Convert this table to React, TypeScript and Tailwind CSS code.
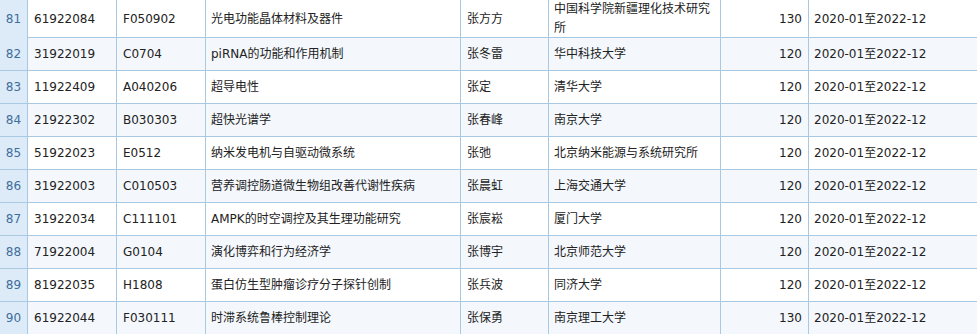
const rows = [
  ["81", "61922084", "F050902", "光电功能晶体材料及器件", "张方方", "中国科学院新疆理化技术研究所", "130", "2020-01至2022-12"],
  ["82", "31922019", "C0704", "piRNA的功能和作用机制", "张冬雷", "华中科技大学", "120", "2020-01至2022-12"],
  ["83", "11922409", "A040206", "超导电性", "张定", "清华大学", "120", "2020-01至2022-12"],
  ["84", "21922302", "B030303", "超快光谱学", "张春峰", "南京大学", "120", "2020-01至2022-12"],
  ["85", "51922023", "E0512", "纳米发电机与自驱动微系统", "张弛", "北京纳米能源与系统研究所", "120", "2020-01至2022-12"],
  ["86", "31922003", "C010503", "营养调控肠道微生物组改善代谢性疾病", "张晨虹", "上海交通大学", "120", "2020-01至2022-12"],
  ["87", "31922034", "C111101", "AMPK的时空调控及其生理功能研究", "张宸崧", "厦门大学", "120", "2020-01至2022-12"],
  ["88", "71922004", "G0104", "演化博弈和行为经济学", "张博宇", "北京师范大学", "120", "2020-01至2022-12"],
  ["89", "81922035", "H1808", "蛋白仿生型肿瘤诊疗分子探针创制", "张兵波", "同济大学", "120", "2020-01至2022-12"],
  ["90", "61922044", "F030111", "时滞系统鲁棒控制理论", "张保勇", "南京理工大学", "130", "2020-01至2022-12"],
];

const App = () => {
  return (
    <div className="w-[977px] h-[334px] overflow-hidden bg-white font-['DejaVu_Sans','Noto_Sans_CJK_SC',sans-serif] text-[12px] text-[#222]">
      {rows.map((r, i) => (
        <div
          key={r[0]}
          className={
            "grid grid-cols-[28px_89px_89px_255px_88px_172px_88px_1fr] border-b border-[#a9c9e2] " +
            (i === 0 ? "h-[38px] " : "h-[33px] ") +
            (i % 2 === 1 ? "bg-[#f4f8fd]" : "bg-white")
          }
        >
          <div className="flex items-center justify-center border-r border-[#a9c9e2] bg-[#dcebf7] text-[#3f6d9c]">
            {r[0]}
          </div>
          <div className="flex items-center pl-[6px] border-r border-[#a9c9e2]">{r[1]}</div>
          <div className="flex items-center pl-[6px] border-r border-[#a9c9e2]">{r[2]}</div>
          <div className="flex items-center pl-[5px] border-r border-[#a9c9e2]">{r[3]}</div>
          <div className="flex items-center pl-[6px] border-r border-[#a9c9e2]">{r[4]}</div>
          <div className="flex items-center pl-[5px] pr-[4px] leading-[19px] border-r border-[#a9c9e2]">{r[5]}</div>
          <div className="flex items-center justify-end pr-[6px] border-r border-[#a9c9e2]">{r[6]}</div>
          <div className="flex items-center pl-[5px]">{r[7]}</div>
        </div>
      ))}
    </div>
  );
};

export default App;
